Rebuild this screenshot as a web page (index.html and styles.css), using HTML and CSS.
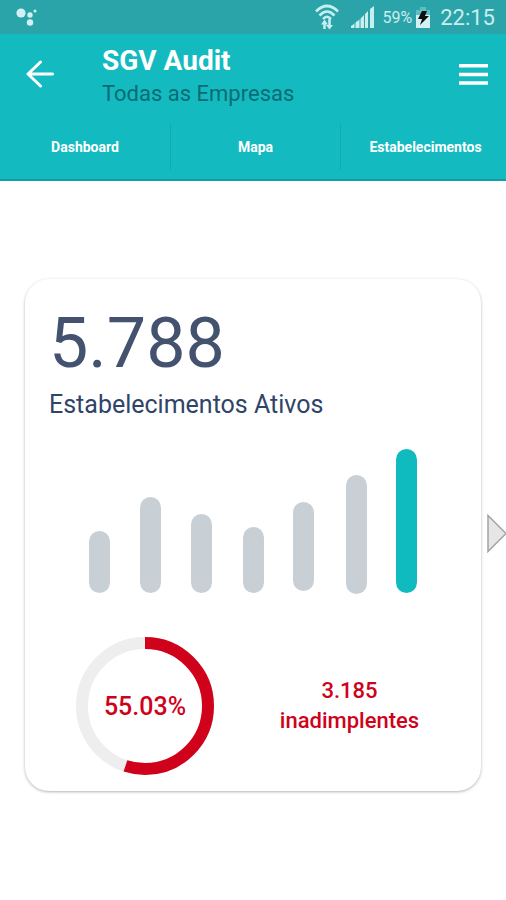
FILE: index.html
```html
<!DOCTYPE html>
<html lang="pt-BR">
   <head>
      <meta charset="utf-8">
      <title>SGV Audit</title>
      <meta name="viewport" content="width=device-width, initial-scale=1">
      <link rel="stylesheet" href="styles.css">
   </head>
   <body>
      <div class="statusbar">
         <svg class="assistant" width="22" height="20" viewBox="0 0 22 20" fill="#d3f1f3">
            <circle cx="5" cy="6" r="4.6"></circle>
            <circle cx="14" cy="8" r="2.7"></circle>
            <circle cx="14" cy="15.500" r="3.200"></circle>
            <circle cx="19" cy="4" r="1.600"></circle>
         </svg>
         <svg class="wifi" width="24" height="26" viewBox="0 0 24 26" fill="none" stroke="#c9eef0" stroke-width="2.600">
            <path d="M1 7.500Q12-3.500 23 7.500"></path>
            <path d="M4.500 11.500Q12 3.500 19.500 11.500"></path>
            <path d="M8 15Q12 10.500 16 15"></path>
            <path d="M9.500 25V18M14.500 15V23" stroke-width="2.500"></path>
            <path d="M6 20.500l3.500-5 3.500 5zM11 21l3.500 4.500 3.500-4.500z" fill="#c9eef0" stroke="none"></path>
         </svg>
         <svg class="signal" width="23" height="22" viewBox="0 0 23 22" fill="#c9eef0">
            <path d="M0 22v-2l3-2v4zM5 22v-6l3-2v8zM10 22v-10l3-3v13zM14 22V8l3-3v17zM19 22V3l4-3v22z"></path>
            <path d="M3 22v-4l2-2v6zM8 22v-8l2-2v10z" opacity=".5"></path>
         </svg>
         <span class="percent">59%</span>
         <svg class="battery" width="14" height="21" viewBox="0 0 14 21">
            <path d="M4 0h6v3h4v7H0V3h4z" fill="#5dbfc2"></path>
            <path d="M0 8h14v13H0z" fill="#d3f1f3"></path>
            <path d="M6 4h5l-2 5h4L4 18l2-6H2z" fill="#0b1112"></path>
         </svg>
         <span class="clock">22:15</span>
      </div>
      <header>
         <div class="topbar">
            <button class="back" aria-label="Voltar">
               <svg width="28" height="28" viewBox="0 0 28 28" fill="none" stroke="#fff" stroke-width="3" stroke-linecap="round" stroke-linejoin="round">
                  <path d="M26.500 14H2M14.500 2L2 14l12.500 12"></path>
               </svg>
            </button>
            <div class="apptitle">
               <h1>SGV Audit</h1>
               <p>Todas as Empresas</p>
            </div>
            <button class="menu" aria-label="Menu">
               <svg width="29" height="21" viewBox="0 0 29 21" fill="#fff">
                  <path d="M0 0h29v3.500H0zM0 8.700h29v3.500H0zM0 17.200h29v3.500H0z"></path>
               </svg>
            </button>
         </div>
         <nav class="tabs">
            <a class="tab" href="#dashboard">Dashboard</a>
            <a class="tab" href="#mapa">Mapa</a>
            <a class="tab" href="#estabelecimentos">Estabelecimentos</a>
         </nav>
      </header>
      <main id="dashboard">
         <section class="card">
            <h2 class="total">5.788</h2>
            <p class="label">Estabelecimentos Ativos</p>
            <svg class="chart" viewBox="0 0 328 145" fill="#c9d0d5">
               <rect x="0" y="82" width="21" height="62" rx="10.500"></rect>
               <rect x="51" y="48" width="21" height="96" rx="10.500"></rect>
               <rect x="102" y="65" width="21" height="79" rx="10.500"></rect>
               <rect x="154" y="78" width="21" height="66" rx="10.500"></rect>
               <rect x="204" y="53" width="21" height="89" rx="10.500"></rect>
               <rect x="257" y="26" width="21" height="119" rx="10.500"></rect>
               <rect x="307" y="0" width="21" height="144" rx="10.500" fill="#10bbc0"></rect>
            </svg>
            <div class="debtors">
               <div class="donut">
                  <svg viewBox="0 0 138 138" fill="none" stroke-width="12">
                     <circle cx="69" cy="69" r="63" stroke="#eee"></circle>
                     <circle cx="69" cy="69" r="63" stroke="#d0021b" pathLength="100" stroke-dasharray="55.03 100" transform="rotate(-90 69 69)"></circle>
                  </svg>
                  <span class="rate">55.03%</span>
               </div>
               <p class="count">3.185<br>inadimplentes</p>
            </div>
         </section>
         <button class="next" aria-label="Próximo">
            <svg width="19" height="39" viewBox="0 0 19 39" fill="#e6e6e6" stroke="#a3a3a3" stroke-width="1.500">
               <path d="M1 1.500v36L19 19.500z"></path>
            </svg>
         </button>
      </main>
   </body>
</html>
```

FILE: styles.css
```css
*{
    box-sizing: border-box;
}
body{
    margin: 0;
    font-family: Roboto, sans-serif;
    background: #fff;
}
h1, h2, p{
    margin: 0;
    font-weight: 400;
}
svg{
    display: block;
}
button{
    border: 0;
    padding: 0;
    background: none;
    cursor: pointer;
}
.statusbar{
    display: flex;
    align-items: center;
    height: 34px;
    padding: 0 11px 0 16px;
    background: #2aa4a8;
    color: #c9eef0;
}
.assistant{
    margin-right: auto;
}
.wifi{
    margin-right: 12px;
}
.signal{
    margin-right: 9px;
}
.percent{
    margin-right: 4px;
    font-size: 16px;
}
.battery{
    margin-right: 10px;
}
.clock{
    font-size: 22px;
}
header{
    background: #13bbc1;
    color: #fff;
    border-bottom: 2px solid #129fa6;
}
.topbar{
    display: flex;
    align-items: center;
    height: 80px;
    padding: 0 18px 0 26px;
}
.apptitle{
    flex: 1;
    padding: 4px 0 0 48px;
}
h1{
    font-size: 28px;
    line-height: 36px;
    font-weight: 700;
}
.apptitle p{
    font-size: 22px;
    line-height: 30px;
    color: #0b6b73;
}
.tabs{
    display: flex;
    overflow: hidden;
    padding: 10px 0 9px;
}
.tab{
    flex: 0 0 33.6%;
    line-height: 46px;
    font-size: 14px;
    font-weight: 700;
    text-align: center;
    text-decoration: none;
    color: #fff;
}
.tab + .tab{
    border-left: 1px solid #12aab0;
}
main{
    position: relative;
    padding: 98px 25px;
}
.card{
    padding: 24px 24px 16px;
    border-radius: 24px;
    box-shadow: 0 1px 3px rgba(0,0,0,.3);
}
.total{
    font-size: 70px;
    line-height: 80px;
    color: #43526e;
}
.label{
    font-size: 25px;
    line-height: 44px;
    color: #2f4468;
}
.chart{
    margin: 22px 40px 0;
}
.debtors{
    display: flex;
    align-items: center;
    margin-top: 43px;
    padding-left: 27px;
    color: #d0021b;
}
.donut{
    display: grid;
    width: 138px;
}
.donut svg, .rate{
    grid-area: 1 / 1;
}
.rate{
    place-self: center;
    font-size: 25px;
    font-weight: 500;
}
.count{
    flex: 1;
    padding-left: 28px;
    font-size: 22px;
    line-height: 30px;
    font-weight: 500;
    text-align: center;
}
.next{
    position: absolute;
    right: 0;
    top: 333px;
}
```
